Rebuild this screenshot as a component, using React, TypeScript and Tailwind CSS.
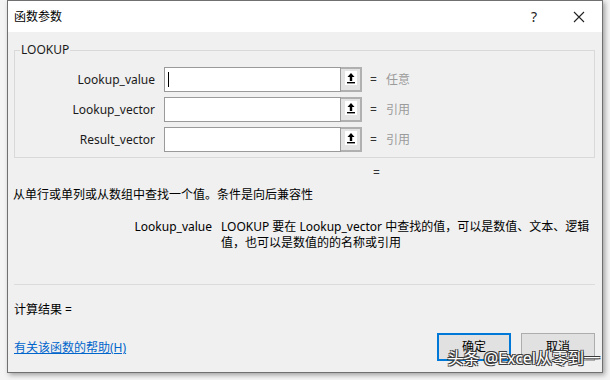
import React from 'react';

const FONT = "font-['Noto_Sans','Noto_Sans_CJK_SC',sans-serif]";

function CollapseIcon() {
    return (
        <svg width="12" height="14" viewBox="0 0 12 14" className="block">
            <rect x="0" y="0" width="12" height="14" fill="#ffffff" />
            <path d="M6 2 L2.5 6 H4.8 V10 H7.2 V6 H9.5 Z" fill="#000000" />
            <rect x="2" y="11" width="8" height="1.4" fill="#000000" />
        </svg>
    );
}

function ArgRow({ label, hint, focused }: { label: string; hint: string; focused?: boolean }) {
    return (
        <div className="flex h-[25px] items-center">
            <div className="w-[141px] pr-[1px] text-right text-[12px] text-[#1a1a1a]">{label}</div>
            <div className="ml-[8px] flex h-[25px] w-[177px] items-center border border-[#9a9a9a] bg-white pl-[3px]">
                {focused && <div className="h-[15px] w-px bg-black" />}
            </div>
            <div className="flex h-[25px] w-[21px] items-start justify-center border-2 border-l-0 border-[#b0b0b0] bg-[#e4e4e4] pt-[2px]">
                <CollapseIcon />
            </div>
            <span className="ml-[8px] text-[12px] text-[#333]">=</span>
            <span className="ml-[9px] text-[12px] text-[#9b9b9b]">{hint}</span>
        </div>
    );
}

export default function App() {
    return (
        <div className={`relative h-[380px] w-[610px] overflow-hidden bg-[#f4f4f4] ${FONT}`}>
            <div className="ml-[7px] flex h-[373px] w-[596px] flex-col border border-[#707070] bg-[#f0f0f0] shadow-[2px_2px_5px_rgba(0,0,0,0.35)]">
                {/* title bar */}
                <div className="flex h-[31px] items-center bg-white">
                    <span className="ml-[6px] text-[12px] text-black">函数参数</span>
                    <div className="ml-auto flex h-full items-center">
                        <div className="flex h-full w-[44px] items-center justify-center text-[14px] text-[#222]">?</div>
                        <div className="flex h-full w-[46px] items-center justify-center">
                            <svg width="12" height="12" viewBox="0 0 12 12">
                                <path d="M1 1 L11 11 M11 1 L1 11" stroke="#222" strokeWidth="1.1" />
                            </svg>
                        </div>
                    </div>
                </div>

                <div className="flex flex-1 flex-col px-[6px] pr-[6px]">
                    <fieldset className="mt-[10px] mr-[1px] border border-[#d9d9d9] pb-[5px]">
                        <legend className="ml-[5px] px-px text-[12px] leading-[16px] text-[#1a1a1a]">LOOKUP</legend>
                        <div className="mt-[9px] flex flex-col gap-[5px]">
                            <ArgRow label="Lookup_value" hint="任意" focused />
                            <ArgRow label="Lookup_vector" hint="引用" />
                            <ArgRow label="Result_vector" hint="引用" />
                        </div>
                    </fieldset>

                    <div className="mt-[7px] pl-[359px] text-[12px] leading-[16px] text-[#333]">=</div>
                    <div className="mt-[6px] -ml-px text-[12px] leading-[16px] text-black">
                        从单行或单列或从数组中查找一个值。条件是向后兼容性
                    </div>

                    <div className="mt-[16px] flex text-[12px] leading-[16px] text-black">
                        <div className="w-[198px] shrink-0 text-right">Lookup_value</div>
                        <div className="ml-[9px]">
                            LOOKUP 要在 Lookup_vector 中查找的值，可以是数值、文本、逻辑
                            <br />
                            值，也可以是数值的的名称或引用
                        </div>
                    </div>

                    <div className="mt-[33px] mr-[1px] h-px bg-[#dcdcdc]" />

                    <div className="mt-[17px] text-[12px] leading-[16px] text-black">计算结果 =</div>

                    <div className="mt-[15px] flex items-center">
                        <a className="mt-[2px] text-[12px] leading-[16px] text-[#0066cc] underline">有关该函数的帮助(H)</a>
                        <div className="ml-auto flex gap-[10px] pr-px">
                            <div className="flex h-[28px] w-[74px] items-center justify-center border-2 border-[#0078d7] bg-[#e1e1e1] text-[12px] text-black">
                                确定
                            </div>
                            <div className="flex h-[28px] w-[74px] items-center justify-center border border-[#adadad] bg-[#e1e1e1] text-[12px] text-black">
                                取消
                            </div>
                        </div>
                    </div>
                </div>
            </div>

            {/* watermark */}
            <div className="absolute right-[10px] bottom-[12px] text-[16px] leading-[20px] text-white [text-shadow:1px_1px_0_#3a3a3a,-1px_-1px_0_#3a3a3a,1px_-1px_0_#3a3a3a,-1px_1px_0_#3a3a3a]">
                头条 @Excel从零到一
            </div>
        </div>
    );
}
